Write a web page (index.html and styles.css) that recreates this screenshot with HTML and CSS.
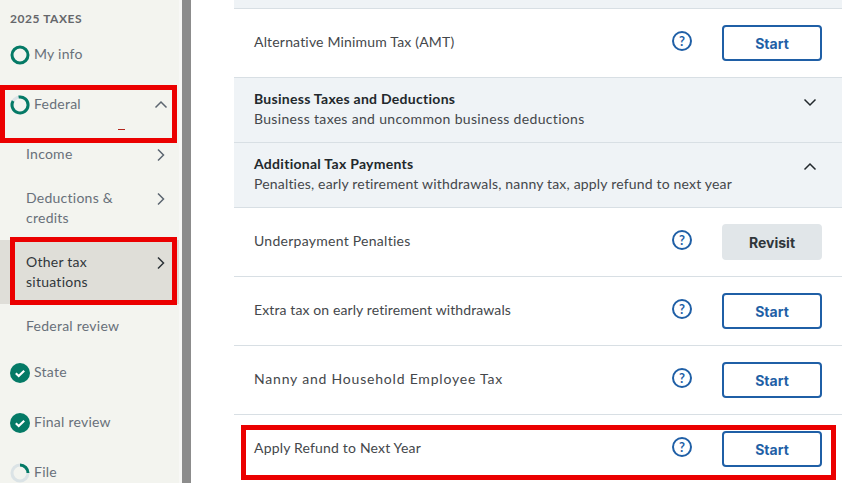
FILE: index.html
```html
<!DOCTYPE html>
<html lang="en">
<head>
<meta charset="utf-8">
<title>2025 Taxes</title>
<link rel="stylesheet" href="styles.css">
</head>
<body>
<div class="page">
  <nav class="sidebar">
    <div class="year">2025 TAXES</div>
    <div class="step step-info">
      <svg class="ring" viewBox="0 0 20 20"><circle cx="10" cy="10" r="8" fill="none" stroke="#047a66" stroke-width="3"/></svg>
      <span>My info</span>
    </div>
    <div class="step step-federal">
      <svg class="ring" viewBox="0 0 20 20"><circle cx="10" cy="10" r="8" fill="none" stroke="#dbe3e6" stroke-width="3"/><path d="M8.6 2.1A8 8 0 1 1 3.1 6" fill="none" stroke="#047a66" stroke-width="3"/></svg>
      <span>Federal</span>
      <svg class="chev" viewBox="0 0 14 14"><path d="M1.5 9.5 7 4l5.500 5.500" fill="none" stroke="#5c6670" stroke-width="1.500"/></svg>
    </div>
    <div class="sub sub-income"><span>Income</span><svg class="chev" viewBox="0 0 14 14"><path d="M4 1.500 9.500 7 4 12.500" fill="none" stroke="#5c6670" stroke-width="1.500"/></svg></div>
    <div class="sub sub-ded"><span>Deductions &amp;<br>credits</span><svg class="chev" viewBox="0 0 14 14"><path d="M4 1.500 9.500 7 4 12.500" fill="none" stroke="#5c6670" stroke-width="1.500"/></svg></div>
    <div class="sub sub-other"><span>Other tax<br>situations</span><svg class="chev" viewBox="0 0 14 14"><path d="M4 1.500 9.500 7 4 12.500" fill="none" stroke="#2c3338" stroke-width="1.500"/></svg></div>
    <div class="sub sub-review"><span>Federal review</span></div>
    <div class="step step-state">
      <svg class="ring" viewBox="0 0 20 20"><circle cx="10" cy="10" r="10" fill="#047a66"/><path d="M5.800 10.300 8.700 13l5.500-5.300" fill="none" stroke="#fff" stroke-width="2.200"/></svg>
      <span>State</span>
    </div>
    <div class="step step-final">
      <svg class="ring" viewBox="0 0 20 20"><circle cx="10" cy="10" r="10" fill="#047a66"/><path d="M5.800 10.300 8.700 13l5.500-5.300" fill="none" stroke="#fff" stroke-width="2.200"/></svg>
      <span>Final review</span>
    </div>
    <div class="step step-file">
      <svg class="ring" viewBox="0 0 20 20"><circle cx="10" cy="10" r="8" fill="none" stroke="#dbe3e6" stroke-width="3"/><path d="M10 2a8 8 0 0 1 8 8" fill="none" stroke="#047a66" stroke-width="3"/></svg>
      <span>File</span>
    </div>
  </nav>
  <div class="strip"></div>
  <div class="divider"></div>
  <main class="main">
    <div class="top"></div>
    <div class="row">
      <span class="label">Alternative Minimum Tax (AMT)</span>
      <svg class="help" viewBox="0 0 20 20"><circle cx="10" cy="10" r="9" fill="none" stroke="#1f5fa6" stroke-width="2"/><text x="10" y="14.500" text-anchor="middle" class="help-q">?</text></svg>
      <button class="btn">Start</button>
    </div>
    <div class="head">
      <div class="head-text"><div class="head-title title-wide">Business Taxes and Deductions</div><div class="head-sub sub-wide">Business taxes and uncommon business deductions</div></div>
      <svg class="head-chev" viewBox="0 0 14 14"><path d="M1.500 4.500 7 10l5.500-5.500" fill="none" stroke="#22282c" stroke-width="1.500"/></svg>
    </div>
    <div class="head">
      <div class="head-text"><div class="head-title title-wide">Additional Tax Payments</div><div class="head-sub">Penalties, early retirement withdrawals, nanny tax, apply refund to next year</div></div>
      <svg class="head-chev" viewBox="0 0 14 14"><path d="M1.500 9.500 7 4l5.500 5.500" fill="none" stroke="#22282c" stroke-width="1.500"/></svg>
    </div>
    <div class="row">
      <span class="label label-under">Underpayment Penalties</span>
      <svg class="help" viewBox="0 0 20 20"><circle cx="10" cy="10" r="9" fill="none" stroke="#1f5fa6" stroke-width="2"/><text x="10" y="14.500" text-anchor="middle" class="help-q">?</text></svg>
      <button class="btn btn-revisit">Revisit</button>
    </div>
    <div class="row">
      <span class="label label-extra">Extra tax on early retirement withdrawals</span>
      <svg class="help" viewBox="0 0 20 20"><circle cx="10" cy="10" r="9" fill="none" stroke="#1f5fa6" stroke-width="2"/><text x="10" y="14.500" text-anchor="middle" class="help-q">?</text></svg>
      <button class="btn">Start</button>
    </div>
    <div class="row">
      <span class="label label-nanny">Nanny and Household Employee Tax</span>
      <svg class="help" viewBox="0 0 20 20"><circle cx="10" cy="10" r="9" fill="none" stroke="#1f5fa6" stroke-width="2"/><text x="10" y="14.500" text-anchor="middle" class="help-q">?</text></svg>
      <button class="btn">Start</button>
    </div>
    <div class="row row-last">
      <span class="label">Apply Refund to Next Year</span>
      <svg class="help" viewBox="0 0 20 20"><circle cx="10" cy="10" r="9" fill="none" stroke="#1f5fa6" stroke-width="2"/><text x="10" y="14.500" text-anchor="middle" class="help-q">?</text></svg>
      <button class="btn">Start</button>
    </div>
  </main>
  <div class="mark mark-federal"><span class="tick"></span></div>
  <div class="mark mark-other"></div>
  <div class="mark mark-refund"></div>
</div>
</body>
</html>
```
FILE: styles.css
```css
* { box-sizing: border-box; }
html, body { margin: 0; padding: 0; }
body { background: #fff; font-family: Lato, "Open Sans", sans-serif; color: #44474b; }
.page { position: relative; display: flex; width: 845px; height: 483px; overflow: hidden; }

.sidebar { width: 179px; flex: none; height: 483px; background: #f3f4ef; color: #68707a; font-size: 14px; overflow: hidden; letter-spacing: .25px; }
.strip { width: 3px; flex: none; background: #f8f8f6; }
.divider { width: 9px; flex: none; background: #8c8c8c; }

.year { padding: 12px 0 0 10px; height: 34px; font-size: 12px; font-weight: 700; color: #65676b; line-height: 14px; letter-spacing: .55px; }
.step { display: flex; align-items: center; gap: 4px; padding-left: 10px; height: 20px; }
.step span { margin-top: -3px; }
.ring { width: 20px; height: 20px; flex: none; }
.step-info { margin-top: 11px; }
.step-federal { margin-top: 30px; padding-right: 11px; }
.chev { width: 14px; height: 14px; flex: none; margin-left: auto; }
.sub { display: flex; align-items: flex-start; padding: 0 11px 0 26px; line-height: 20px; }
.sub .chev { margin-top: 4px; }
.sub-income { margin-top: 29px; height: 20px; }
.sub-ded { margin-top: 24px; height: 40px; }
.sub-other { margin-top: 12px; height: 64px; padding-top: 12px; padding-bottom: 12px; background: #dfded8; color: #30363b; }
.sub-review { margin-top: 12px; height: 20px; }
.step-state { margin-top: 27px; }
.step-final { margin-top: 30px; }
.step-file { margin-top: 30px; }

.main { width: 608px; margin-left: 43px; flex: none; font-size: 14px; }
.top { height: 9px; background: #eff3f6; border-bottom: 1px solid #d8dfe4; }
.row { display: flex; align-items: center; height: 69px; padding: 0 20px; border-bottom: 1px solid #d8dfe4; letter-spacing: .18px; }
.label { flex: 1; margin-top: -4px; }
.label-under { letter-spacing: .27px; }
.label-extra { letter-spacing: .11px; }
.label-nanny { letter-spacing: .8px; }
.help { width: 20px; height: 20px; flex: none; margin: -4px 30px 0 0; }
.help-q { font: 700 13px Lato, sans-serif; fill: #1f5fa6; }
.btn { width: 100px; height: 36px; flex: none; background: #fff; border: 2px solid #1f5fa6; border-radius: 4px; color: #1f5fa6; font: 700 14px Inter, sans-serif; letter-spacing: 0; padding: 0; }
.btn-revisit { background: #e1e6e9; border-color: #e1e6e9; color: #30363b; }
.head { display: flex; align-items: center; justify-content: space-between; height: 65px; padding: 0 25px 0 20px; background: #eff3f6; border-bottom: 1px solid #d8dfe4; line-height: 20px; letter-spacing: .18px; }
.head-text { margin-top: -2px; }
.head-title { font-weight: 700; color: #22282c; }
.title-wide { letter-spacing: .28px; }
.sub-wide { letter-spacing: .33px; }
.head-chev { width: 14px; height: 14px; margin-top: -16px; }

.mark { position: absolute; border: 5px solid #eb0000; pointer-events: none; }
.mark-federal { left: 0; top: 85px; width: 177px; height: 58px; }
.tick { position: absolute; left: 113px; top: 39px; width: 7px; height: 1px; background: #b3261e; }
.mark-other { left: 10px; top: 237px; width: 167px; height: 68px; }
.mark-refund { left: 241px; top: 425px; width: 595px; height: 55px; }
```
